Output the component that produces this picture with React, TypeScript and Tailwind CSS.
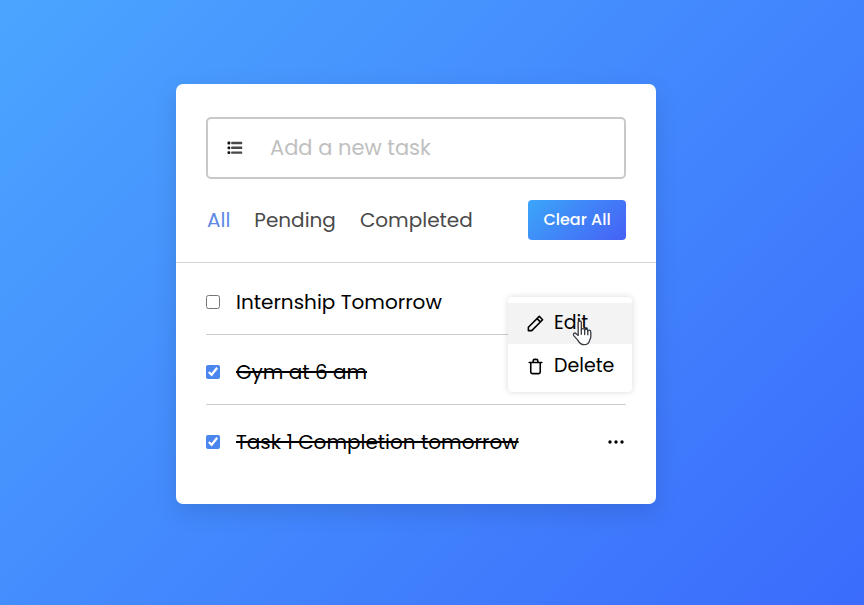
import { useState } from "react";

type Filter = "All" | "Pending" | "Completed";
type Task = { id: number; name: string; done: boolean };

const filters: Filter[] = ["All", "Pending", "Completed"];

const initialTasks: Task[] = [
  { id: 1, name: "Internship Tomorrow", done: false },
  { id: 2, name: "Gym at 6 am", done: true },
  { id: 3, name: "Task 1 Completion tomorrow", done: true },
];

function ListIcon() {
  return (
    <svg className="size-4" viewBox="0 0 16 16" fill="#484848" aria-hidden="true">
      <rect x="0.5" y="1.6" width="2.800" height="2.800" rx="1" fill="#111" />
      <rect x="0.5" y="6.400" width="2.800" height="2.800" rx="1" fill="#111" />
      <rect x="0.5" y="11.200" width="2.800" height="2.800" rx="1" fill="#111" />
      <rect x="4.200" y="1.800" width="11" height="2.400" rx="0.600" />
      <rect x="4.200" y="6.600" width="11" height="2.400" rx="0.600" />
      <rect x="4.200" y="11.400" width="11" height="2.400" rx="0.600" />
    </svg>
  );
}

function PenIcon() {
  return (
    <svg className="size-[19px]" viewBox="0 0 24 24" fill="currentColor" aria-hidden="true">
      <path d="M22,7.24a1,1,0,0,0-.29-.71L17.47,2.29A1,1,0,0,0,16.76,2a1,1,0,0,0-.71.29L13.22,5.12h0L2.29,16.05a1,1,0,0,0-.29.71V21a1,1,0,0,0,1,1H7.24A1,1,0,0,0,8,21.71L18.87,10.78h0L21.71,8a1.19,1.19,0,0,0,.22-.33,1,1,0,0,0,0-.24.7.7,0,0,0,0-.14ZM6.83,20H4V17.17l9.93-9.93,2.83,2.83ZM18.17,8.66,15.34,5.83l1.42-1.41,2.82,2.82Z" />
    </svg>
  );
}

function TrashIcon() {
  return (
    <svg className="size-[19px]" viewBox="0 0 24 24" fill="currentColor" aria-hidden="true">
      <path d="M20,6H16V5a3,3,0,0,0-3-3H11A3,3,0,0,0,8,5V6H4A1,1,0,0,0,4,8H5V19a3,3,0,0,0,3,3h8a3,3,0,0,0,3-3V8h1a1,1,0,0,0,0-2ZM10,5a1,1,0,0,1,1-1h2a1,1,0,0,1,1,1V6H10Zm7,14a1,1,0,0,1-1,1H8a1,1,0,0,1-1-1V8H17Z" />
    </svg>
  );
}

function DotsIcon() {
  return (
    <svg className="size-5" viewBox="0 0 20 20" fill="currentColor" aria-hidden="true">
      <circle cx="4" cy="10" r="1.7" />
      <circle cx="10" cy="10" r="1.7" />
      <circle cx="16" cy="10" r="1.7" />
    </svg>
  );
}

function HandPointer() {
  return (
    <svg
      className="pointer-events-none absolute top-[21px] left-[63px] h-[30px] w-6"
      viewBox="0 0 20 25"
      fill="#fff"
      stroke="#3a3a44"
      strokeWidth="1.1"
      strokeLinejoin="round"
      strokeLinecap="round"
      aria-hidden="true"
    >
      <path d="M6 14.500V4c0-2 2.600-2 2.600 0v6c0-1.500 2.800-1.500 2.800.3 0-1.500 2.600-1.300 2.600.7 0-1.400 2.500-1.200 2.500.8v3.700c0 1.500-.9 2.500-1.200 3.700-.5 2-1.800 3-4.300 3-2.800 0-4-1.300-5.200-3.600L2.300 14.700c-1-1.900.9-2.800 2-1.600z" />
      <path d="M8.600 10v3.600M11.400 10.500v3.300M14 11.200v2.800" fill="none" />
    </svg>
  );
}

function TaskMenu({ onDelete }: { onDelete: () => void }) {
  return (
    <div className="absolute top-8 -right-1.5 z-10 w-[124px] rounded bg-white pt-1.5 pb-[3px] text-[19px] shadow-[0_0_6px_rgba(0,0,0,0.15)]">
      <button type="button" className="flex h-[41px] w-full items-center gap-[9px] bg-[#f3f3f3] pl-[18px]">
        <PenIcon />
        Edit
      </button>
      <button type="button" onClick={onDelete} className="flex h-[45px] w-full items-center gap-[9px] pl-[18px]">
        <TrashIcon />
        Delete
      </button>
      <HandPointer />
    </div>
  );
}

export default function App() {
  const [tasks, setTasks] = useState(initialTasks);
  const [filter, setFilter] = useState<Filter>("All");
  const [openMenu, setOpenMenu] = useState<number | null>(1);

  const visible = tasks.filter((t) => filter === "All" || (filter === "Completed") === t.done);
  const toggle = (id: number) =>
    setTasks(tasks.map((t) => (t.id === id ? { ...t, done: !t.done } : t)));

  return (
    <div className="min-h-screen bg-linear-[135deg,#4ba5ff,#3b6cfc] pt-[84px] pr-8 font-['Poppins','Inter',sans-serif] text-black">
      <main className="mx-auto w-full max-w-[480px] rounded-[7px] bg-white pt-[33px] pb-7 shadow-[0_8px_24px_rgba(0,0,0,0.12)]">
        <div className="mx-[30px] flex h-[62px] items-center rounded-[5px] border-2 border-[#c8c8c8] pl-[19px]">
          <label htmlFor="new-task" aria-label="New task">
            <ListIcon />
          </label>
          <input
            id="new-task"
            type="text"
            placeholder="Add a new task"
            className="ml-[27px] min-w-0 flex-1 bg-transparent text-[21px] outline-none placeholder:text-[#bfbfbf]"
          />
        </div>

        <div className="flex items-center justify-between border-b border-[#d4d4d4] px-[30px] pt-[21px] pb-[22px]">
          <div className="flex gap-6 pl-px text-[20px]">
            {filters.map((f) => (
              <button
                key={f}
                type="button"
                onClick={() => setFilter(f)}
                className={f === filter ? "text-[#5f8ae6]" : "text-[#4a4a4a]"}
              >
                {f}
              </button>
            ))}
          </div>
          <button
            type="button"
            onClick={() => setTasks([])}
            className="h-10 w-[98px] rounded bg-linear-[135deg,#3ba6fa,#4661f5] text-[16px] font-medium text-white"
          >
            Clear All
          </button>
        </div>

        <ul className="px-[30px] pt-0.5">
          {visible.map((task) => (
            <li
              key={task.id}
              className="relative flex h-[70px] items-center justify-between border-b border-[#ccc] pt-1 last:h-[71px] last:border-transparent"
            >
              <label className="flex items-center gap-4">
                <input
                  type="checkbox"
                  checked={task.done}
                  onChange={() => toggle(task.id)}
                  className="size-3.5 accent-[#4a86ee]"
                />
                <span className={task.done ? "text-[20px] line-through" : "text-[20px]"}>
                  {task.name}
                </span>
              </label>
              {task.id === openMenu ? (
                <TaskMenu
                  onDelete={() => {
                    setTasks(tasks.filter((t) => t.id !== task.id));
                    setOpenMenu(null);
                  }}
                />
              ) : (
                task.id === 3 && (
                  <button type="button" aria-label="Task options" onClick={() => setOpenMenu(task.id)}>
                    <DotsIcon />
                  </button>
                )
              )}
            </li>
          ))}
        </ul>
      </main>
    </div>
  );
}
